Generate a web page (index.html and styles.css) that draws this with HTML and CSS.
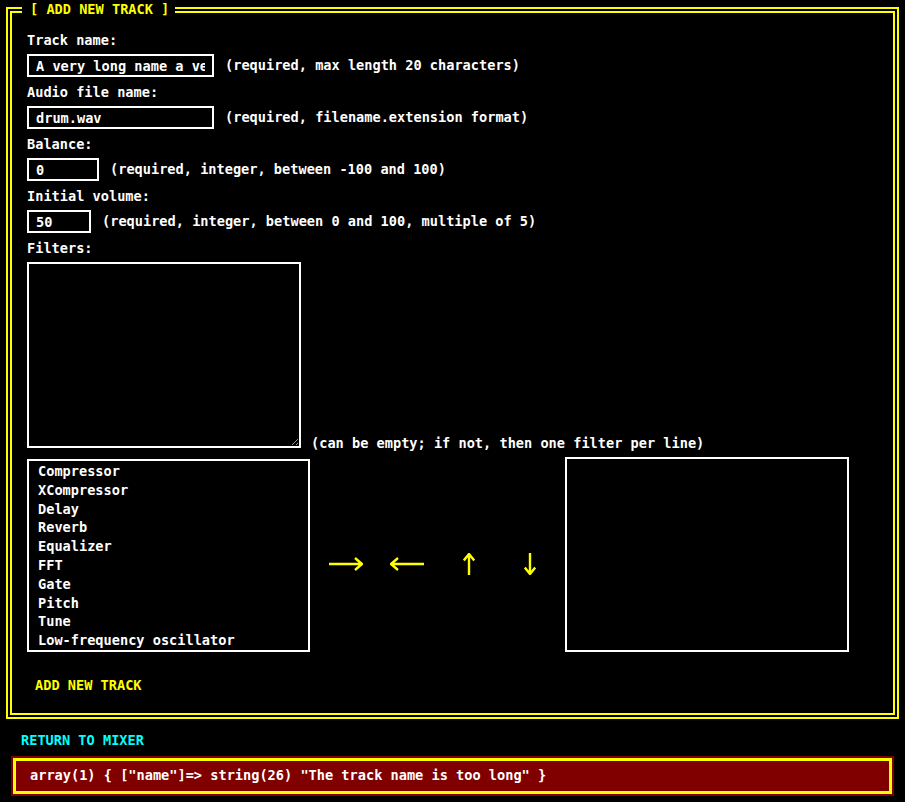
FILE: index.html
```html
<!DOCTYPE html>
<html lang="en">
<head>
<meta charset="utf-8">
<title>Add new track</title>
<link rel="stylesheet" href="styles.css">
</head>
<body>
<fieldset class="panel">
  <legend class="panel-title">[ ADD NEW TRACK ]</legend>

  <label class="field-label" for="track-name">Track name:</label>
  <div class="field-row">
    <input id="track-name" class="text-input w-name" type="text" value="A very long name a very long name">
    <span class="hint">(required, max length 20 characters)</span>
  </div>

  <label class="field-label" for="file-name">Audio file name:</label>
  <div class="field-row">
    <input id="file-name" class="text-input w-name" type="text" value="drum.wav">
    <span class="hint">(required, filename.extension format)</span>
  </div>

  <label class="field-label" for="balance">Balance:</label>
  <div class="field-row">
    <input id="balance" class="text-input w-balance" type="text" value="0">
    <span class="hint">(required, integer, between -100 and 100)</span>
  </div>

  <label class="field-label" for="volume">Initial volume:</label>
  <div class="field-row">
    <input id="volume" class="text-input w-volume" type="text" value="50">
    <span class="hint">(required, integer, between 0 and 100, multiple of 5)</span>
  </div>

  <label class="field-label" for="filters">Filters:</label>
  <div class="area-row">
    <textarea id="filters" class="filters-area"></textarea>
    <span class="hint area-hint">(can be empty; if not, then one filter per line)</span>
  </div>

  <div class="picker">
    <ul class="listbox listbox-left">
      <li>Compressor</li>
      <li>XCompressor</li>
      <li>Delay</li>
      <li>Reverb</li>
      <li>Equalizer</li>
      <li>FFT</li>
      <li>Gate</li>
      <li>Pitch</li>
      <li>Tune</li>
      <li>Low-frequency oscillator</li>
    </ul>
    <div class="mover">
      <button class="move-btn" type="button" aria-label="add">
        <svg width="34" height="14" viewBox="0 0 34 14"><path d="M0 7H33M26 1L33 7L26 13" fill="none" stroke="#ff0" stroke-width="2.4"/></svg>
      </button>
      <button class="move-btn" type="button" aria-label="remove">
        <svg width="34" height="14" viewBox="0 0 34 14"><path d="M34 7H1M8 1L1 7L8 13" fill="none" stroke="#ff0" stroke-width="2.4"/></svg>
      </button>
      <button class="move-btn" type="button" aria-label="move up">
        <svg width="12" height="22" viewBox="0 0 12 22"><path d="M6 22V1M0.8 7.5L6 1L11.2 7.5" fill="none" stroke="#ff0" stroke-width="2.4"/></svg>
      </button>
      <button class="move-btn" type="button" aria-label="move down">
        <svg width="12" height="22" viewBox="0 0 12 22"><path d="M6 0V21M0.8 14.5L6 21L11.2 14.5" fill="none" stroke="#ff0" stroke-width="2.4"/></svg>
      </button>
    </div>
    <ul class="listbox listbox-right"></ul>
  </div>

  <button class="submit-btn" type="button">ADD NEW TRACK</button>
</fieldset>

<a class="nav-link" href="#">RETURN TO MIXER</a>

<div class="error-box">
  <div class="error-inner">array(1) { ["name"]=&gt; string(26) "The track name is too long" }</div>
</div>
</body>
</html>
```

FILE: styles.css
```css
* {
  box-sizing: border-box;
}

html,
body {
  background: #000;
}

body {
  margin: 0;
  padding: 1px 6px 0;
  font-family: "DejaVu Sans Mono", monospace;
  font-weight: bold;
  font-size: 13.62px;
  line-height: 17px;
  color: #fff;
}

.panel {
  margin: 0;
  min-width: 0;
  border: 6px double #ff0;
  padding: 14px 15px 11px 15px;
}

.panel-title {
  color: #ff0;
  margin-left: -5px;
  padding: 0 6px 0 8px;
  line-height: 17px;
}

.field-label {
  display: block;
  margin-bottom: 5px;
}

.field-row {
  display: flex;
  align-items: center;
  gap: 11px;
  margin-bottom: 7px;
}

.text-input {
  height: 23px;
  border: 2px solid #fff;
  background: #000;
  color: #fff;
  font: inherit;
  padding: 0 7px;
  outline: none;
  border-radius: 0;
}

.w-name {
  width: 187px;
}

.w-balance {
  width: 72px;
}

.w-volume {
  width: 64px;
}

.area-row {
  display: flex;
  align-items: flex-end;
  gap: 10px;
}

.filters-area {
  width: 274px;
  height: 186px;
  border: 2px solid #fff;
  background: #000;
  color: #fff;
  font: inherit;
  margin: 0;
  border-radius: 0;
  outline: none;
}

.area-hint {
  margin-bottom: -4px;
}

.picker {
  display: flex;
  align-items: flex-end;
  margin-top: 9px;
}

.listbox {
  list-style: none;
  margin: 0;
  border: 2px solid #fff;
  padding: 1px 0 0 9px;
  flex: none;
}

.listbox li {
  line-height: 18.8px;
}

.listbox-left {
  width: 283px;
  height: 193px;
}

.listbox-right {
  width: 284px;
  height: 195px;
}

.mover {
  display: flex;
  align-self: center;
  margin: 18px 4px 0 5px;
}

.move-btn {
  width: 61.5px;
  height: 22px;
  padding: 0;
  border: 0;
  background: none;
  display: flex;
  align-items: center;
  justify-content: center;
  cursor: pointer;
}

.move-btn svg {
  display: block;
}

.submit-btn {
  display: block;
  margin-top: 17px;
  padding: 8px;
  border: 0;
  background: none;
  color: #ff0;
  font: inherit;
  cursor: pointer;
}

.nav-link {
  display: block;
  margin: 13px 0 0 15px;
  color: #0ff;
  text-decoration: none;
  width: max-content;
}

.error-box {
  margin: 7px 5px 0;
  padding: 2px;
  background: #800000;
}

.error-inner {
  border: 3px solid #ff0;
  padding: 6px 14px 7px;
  white-space: pre;
}
```
